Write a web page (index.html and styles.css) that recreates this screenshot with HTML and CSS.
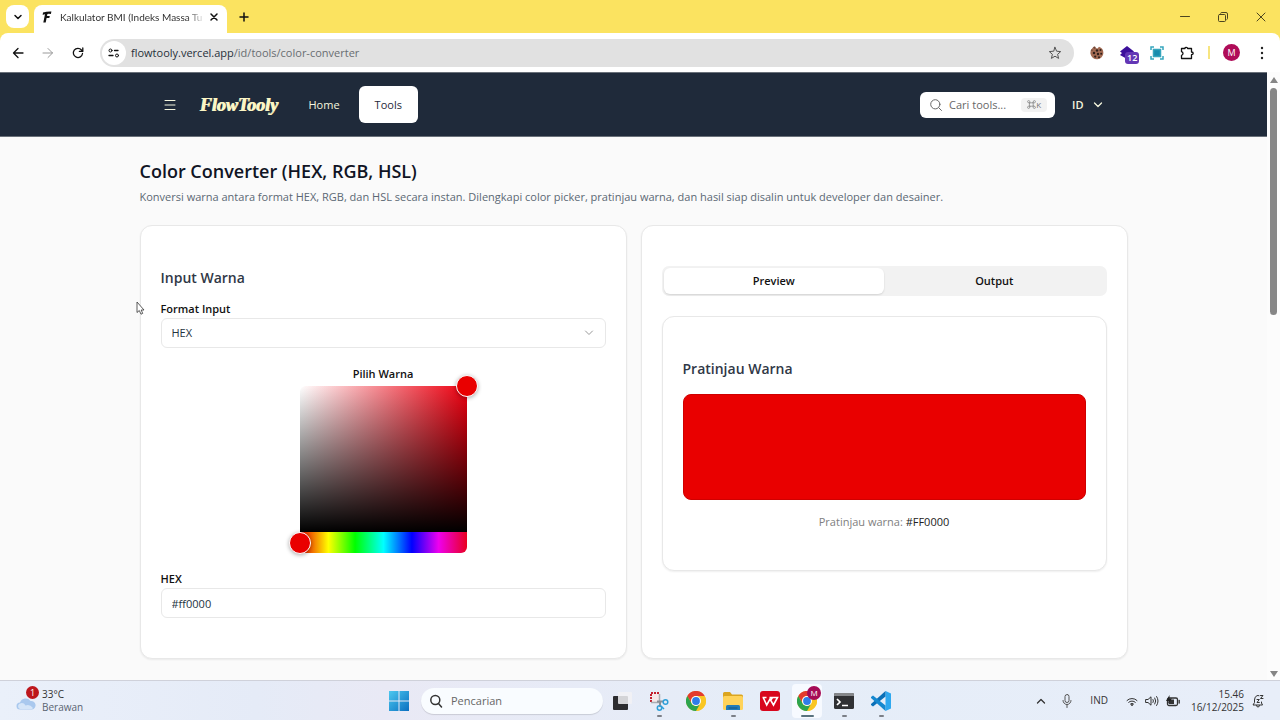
FILE: index.html
```html
<!DOCTYPE html>
<html lang="id">
<head>
<meta charset="utf-8">
<meta name="viewport" content="width=device-width, initial-scale=1">
<title>Color Converter (HEX, RGB, HSL)</title>
<link rel="stylesheet" href="styles.css">
</head>
<body>
<svg class="defs" width="0" height="0" aria-hidden="true">
  <symbol id="chrome" viewBox="0 0 20 20">
    <circle cx="10" cy="10" r="10" fill="#f9c623"/>
    <path d="M10 5h8.7A10 10 0 0 1 10 20l4.3-7.5z" fill="#f9c623"/>
    <path d="M1.3 5A10 10 0 0 1 18.7 5H10a5 5 0 0 0-4.3 7.5z" fill="#e33b2e"/>
    <path d="M1.3 5A10 10 0 0 0 10 20l4.3-7.5a5 5 0 0 1-8.6 0z" fill="#2da44e"/>
    <circle cx="10" cy="10" r="5" fill="#fff"/><circle cx="10" cy="10" r="3.9" fill="#2f7de9"/>
  </symbol>
</svg>

<div class="tabstrip">
  <button class="tab-search" aria-label="Cari tab"><svg width="10" height="10" viewBox="0 0 10 10"><path d="M2 3.5 5 6.5 8 3.5" class="ln thick"/></svg></button>
  <div class="tab">
    <svg width="10" height="12" viewBox="0 0 10 12"><path d="M1 1.6Q5 .4 9.4.6L8.9 3Q6.500 2.600 5.400 3L5 5h2.800l-.5 2H4.600l-.9 4.400H1.300L3 3.200Q1.800 3.200.7 4z" fill="#111"/></svg>
    <span class="tab-title">Kalkulator BMI (Indeks Massa Tu</span>
    <button class="bare" aria-label="Tutup tab"><svg width="10" height="10" viewBox="0 0 10 10"><path d="M2 2l6 6M8 2 2 8" class="ln thick"/></svg></button>
  </div>
  <button class="bare" aria-label="Tab baru"><svg width="12" height="12" viewBox="0 0 12 12"><path d="M6 2v8M2 6h8" class="ln thick"/></svg></button>
  <div class="window-buttons">
    <button class="bare" aria-label="Minimalkan"><svg width="10" height="10" viewBox="0 0 10 10"><path d="M.5 4.500h9" class="ln"/></svg></button>
    <button class="bare" aria-label="Pulihkan"><svg width="10" height="10" viewBox="0 0 10 10"><rect x=".5" y="2.500" width="7" height="7" rx="1" class="ln"/><path d="M2.500 1.200Q3 .5 4 .5h4Q9.500.5 9.500 2v4.500Q9.500 7.300 8.800 7.600" class="ln"/></svg></button>
    <button class="bare" aria-label="Tutup"><svg width="10" height="10" viewBox="0 0 10 10"><path d="M1 1l8 8M9 1 1 9" class="ln"/></svg></button>
  </div>
</div>

<div class="toolbar">
  <button class="bare" aria-label="Kembali"><svg width="12" height="12" viewBox="0 0 12 12"><path d="M11 6H1.500M6 1.500 1.500 6 6 10.500" class="ln mid"/></svg></button>
  <button class="bare muted" aria-label="Maju"><svg width="12" height="12" viewBox="0 0 12 12"><path d="M1 6h9.500M6 1.500 10.500 6 6 10.500" class="ln"/></svg></button>
  <button class="bare" aria-label="Muat ulang"><svg width="12" height="12" viewBox="0 0 12 12"><path d="M10.500 6.500A4.600 4.600 0 1 1 9.500 3L10.700 4.200M10.800 1v3.400H7.400" class="ln mid"/></svg></button>
  <div class="omnibox">
    <button class="site-info" aria-label="Info situs"><svg width="12" height="10" viewBox="0 0 12 10"><circle cx="2.500" cy="2.500" r="1.500" class="ln"/><path d="M6.500 2.500H10M1 7.500h4" class="ln mid"/><circle cx="9" cy="7.500" r="1.500" class="ln"/></svg></button>
    <span class="url">flowtooly.vercel.app<span class="path">/id/tools/color-converter</span></span>
    <button class="bare grey" aria-label="Bookmark"><svg width="14" height="14" viewBox="0 0 14 14"><path d="M7 1.300 8.600 5.200l4.100.4-3.100 2.700 1 4.100L7 10.200l-3.600 2.200 1-4.100L1.300 5.600l4.100-.4z" class="ln"/></svg></button>
  </div>
  <div class="extensions">
    <svg width="14" height="14" viewBox="0 0 14 14"><path d="M5 .6A6.500 6.500 0 1 0 13.400 7 6.500 6.500 0 0 0 9 .8L7.500 2.500 5.500 2z" fill="#a26a52"/><path d="M5 .6 3 1l1.500 2 1.300-1zM.5 4.500 2.800 5 2 3z" fill="#6f4637"/><g fill="#30201b"><circle cx="7" cy="4.500" r="1.200"/><circle cx="10.500" cy="4" r="1"/><circle cx="4" cy="7" r="1.200"/><circle cx="8" cy="8" r="1.200"/><circle cx="11.200" cy="7.800" r="1"/><circle cx="5.200" cy="10.600" r="1.100"/><circle cx="9" cy="11.300" r="1"/></g></svg>
    <span class="ext-count"><svg width="14" height="14" viewBox="0 0 14 14"><path d="M7 0 14 5.500 12 7l2 2-7 4-7-4 2-2L0 5.500z" fill="#3c109b"/></svg><span class="count">12</span></span>
    <svg width="14" height="14" viewBox="0 0 14 14" fill="none" stroke="#35a5bd" stroke-width="1.500"><path d="M1 4V1h3M10 1h3v3M13 10v3h-3M4 13H1v-3"/><rect x="3.500" y="3.500" width="7" height="7" fill="#168bad"/></svg>
    <svg width="14" height="14" viewBox="0 0 14 14"><path d="M1.500 2.500H5Q5 1.300 6.300 1.300t1.300 1.200h3.900V6Q13.200 6 13.200 7.300T11.500 8.700v3.800h-10V9.300Q3 9 3 7.500T1.500 5.700z" class="ln mid"/></svg>
  </div>
  <span class="separator"></span>
  <button class="avatar" aria-label="Profil">M</button>
  <button class="bare" aria-label="Menu"><svg width="4" height="14" viewBox="0 0 4 14" fill="#222"><circle cx="2" cy="2" r="1.200"/><circle cx="2" cy="7" r="1.200"/><circle cx="2" cy="12" r="1.200"/></svg></button>
</div>

<div class="viewport">
  <div class="page">
    <header class="site-header">
      <div class="site-nav">
        <button class="menu" aria-label="Menu situs"><svg width="12" height="12" viewBox="0 0 12 12"><path d="M1 1.500h10M1 6h10M1 10.500h10" class="ln"/></svg></button>
        <a class="brand" href="#">FlowTooly</a>
        <nav class="links"><a href="#">Home</a><a class="active" href="#">Tools</a></nav>
        <button class="search"><svg width="12" height="12" viewBox="0 0 12 12"><circle cx="5.300" cy="5.300" r="4.600" class="ln"/><path d="m8.800 8.800 2.700 2.700" class="ln"/></svg><span>Cari tools...</span><kbd><svg width="9" height="9" viewBox="0 0 8 8"><path d="M2.500 2.500h3v3h-3zM2.500 2.500V1.500a1 1 0 1 0-1 1zM5.500 2.500h1a1 1 0 1 0-1-1zM5.500 5.500v1a1 1 0 1 0 1-1zM2.500 5.500h-1a1 1 0 1 0 1 1z" class="ln hair"/></svg>K</kbd></button>
        <button class="lang">ID<svg width="10" height="10" viewBox="0 0 10 10"><path d="M1.500 3 5 6.500 8.500 3" class="ln mid"/></svg></button>
      </div>
    </header>

    <main class="content">
      <h1>Color Converter (HEX, RGB, HSL)</h1>
      <p class="lead">Konversi warna antara format HEX, RGB, dan HSL secara instan. Dilengkapi color picker, pratinjau warna, dan hasil siap disalin untuk developer dan desainer.</p>
      <div class="columns">
        <section class="card">
          <h2>Input Warna</h2>
          <label for="format">Format Input</label>
          <div class="select-wrap">
            <select id="format" class="field"><option>HEX</option><option>RGB</option><option>HSL</option></select>
            <svg class="caret" width="10" height="10" viewBox="0 0 10 10"><path d="M1.500 3 5 6.500 8.500 3" class="ln"/></svg>
          </div>
          <div class="picker-block">
            <label for="hue">Pilih Warna</label>
            <div class="picker">
              <div class="saturation"><span class="pointer"></span></div>
              <div class="hue"><input id="hue" type="range" min="0" max="360" value="0"></div>
            </div>
          </div>
          <label for="hex">HEX</label>
          <input id="hex" class="field" type="text" value="#ff0000">
        </section>
        <section class="card">
          <div class="tabs" role="tablist">
            <button role="tab" class="selected" aria-selected="true">Preview</button>
            <button role="tab" aria-selected="false">Output</button>
          </div>
          <div class="card inner">
            <h2>Pratinjau Warna</h2>
            <div class="swatch"></div>
            <p class="caption">Pratinjau warna: <strong>#FF0000</strong></p>
          </div>
        </section>
      </div>
    </main>
    <svg class="cursor" width="9" height="14" viewBox="0 0 9 14"><path d="M1 1v10.500l2.300-2 1.700 3.700 1.700-.8L5.200 9H8z" fill="#fff" stroke="#333" stroke-width=".8"/></svg>
  </div>
  <div class="scrollbar"><svg width="8" height="6" viewBox="0 0 8 6"><path d="M4 0 8 6H0z" fill="#858585"/></svg><span class="scroll-thumb"></span><svg width="8" height="6" viewBox="0 0 8 6"><path d="M4 6 0 0h8z" fill="#858585"/></svg></div>
</div>

<footer class="taskbar">
  <button class="weather">
    <span class="weather-icon"><svg width="20" height="13" viewBox="0 0 20 13"><path d="M4 12.500a3.500 3.500 0 0 1 0-7A6 6 0 0 1 14.500 4 4.300 4.300 0 0 1 16 12.500z" fill="#a9c8ee"/><path d="M4 12a3 3 0 0 1 .8-5.800Q8 5.500 9.500 8.500q4-2 7.500 2.500l-1 1z" fill="#d5e5f8"/></svg><span class="alert">1</span></span>
    <span class="weather-text"><span class="degrees">33°C</span><br>Berawan</span>
  </button>
  <div class="apps">
    <button class="app" aria-label="Mulai"><svg width="20" height="20" viewBox="0 0 20 20"><defs><linearGradient id="win" x2="1" y2="1"><stop stop-color="#4cc8ef"/><stop offset="1" stop-color="#0a6fc0"/></linearGradient></defs><path d="M0 0h9.500v9.500H0zM10.500 0H20v9.500h-9.500zM0 10.500h9.500V20H0zM10.500 10.500H20V20h-9.500z" fill="url(#win)"/></svg></button>
    <label class="task-search"><svg width="14" height="14" viewBox="0 0 14 14"><circle cx="6.300" cy="6" r="4.500" class="ln thick"/><path d="m9.500 9.500 3 3.500" class="ln thick"/></svg><input type="text" placeholder="Pencarian" aria-label="Pencarian"></label>
    <button class="app" aria-label="Tampilan tugas"><svg width="20" height="20" viewBox="0 0 20 20"><rect x="1" y="5" width="15" height="14" rx="1" fill="#2c2c2f"/><rect x="6" y="1" width="14" height="12" rx="1" fill="#f2f2f4" fill-opacity=".85"/></svg></button>
    <button class="app open" aria-label="Alat pemotong"><svg width="20" height="20" viewBox="0 0 20 20"><path d="M2 2h9v9H2z" fill="#f5e8ea"/><path d="M2 11V2h8" fill="none" stroke="#c3202f" stroke-width="2" stroke-dasharray="2 1"/><path d="M10.500 3v8.500H2" fill="none" stroke="#a9adb3" stroke-width="1.500"/><path d="M8 10.500h7M11 10v6" fill="none" stroke="#8a9097" stroke-width="2"/><g fill="none" stroke="#2f9fd8" stroke-width="1.500"><circle cx="16.500" cy="11" r="2.300"/><circle cx="10.500" cy="17" r="2.200"/><path d="m12 15 3 3"/></g></svg></button>
    <button class="app" aria-label="Chrome"><svg width="20" height="20"><use href="#chrome"/></svg></button>
    <button class="app open" aria-label="File Explorer"><svg width="20" height="20" viewBox="0 0 20 20"><path d="M0 2.500Q0 1 1.500 1H7l2 2.500h9.500Q20 3.500 20 5v6H0z" fill="#dba520"/><rect y="5" width="20" height="14" rx="1.500" fill="#ffd35a"/><path d="M3 19v-3.500Q3 14 4.500 14h11q1.500 0 1.500 1.500V19z" fill="#217cb9"/><path d="M5.500 17h9" stroke="#145380"/></svg></button>
    <button class="app" aria-label="WPS Office"><svg width="20" height="20" viewBox="0 0 20 20"><rect width="20" height="20" rx="3" fill="#d8061d"/><path d="M2.500 6.500h4M9.500 6.500h8L13.500 14 10 8 6.700 14 3.200 6.500M10.500 9.500l2-3" fill="none" stroke="#fff" stroke-width="1.600"/></svg></button>
    <button class="app open current" aria-label="Chrome, profil M"><svg width="20" height="20"><use href="#chrome"/></svg><span class="profile">M</span></button>
    <button class="app open" aria-label="Terminal"><svg width="20" height="20" viewBox="0 0 20 20"><rect y="2" width="20" height="16" rx="1.500" fill="#303134"/><path d="M0 5V3.500Q0 2 1.500 2h17Q20 2 20 3.500V5z" fill="#85878a"/><path d="m3 8 3 3-3 3M8 14.500h6" fill="none" stroke="#fff" stroke-width="1.700"/></svg></button>
    <button class="app open" aria-label="Visual Studio Code"><svg width="20" height="20" viewBox="0 0 20 20"><path d="M14.500 0 20 2.500v15L14.500 20z" fill="#2fa8ef"/><path d="M14.500 0v5.500L2 15.500 0 14v-1L14.500 0z" fill="#0b70b8"/><path d="M14.500 20v-5.500L2 4.500 0 6v1z" fill="#1688cf"/></svg></button>
  </div>
  <div class="tray">
    <button class="bare" aria-label="Ikon tersembunyi"><svg width="10" height="10" viewBox="0 0 10 10"><path d="M1.500 7 5 3.500 8.500 7" class="ln mid"/></svg></button>
    <svg class="mic" width="10" height="14" viewBox="0 0 10 14"><rect x="3" y=".5" width="4" height="8" rx="2" class="ln"/><path d="M1 6.500a4 4 0 0 0 8 0M5 10.500V13.500" class="ln"/></svg>
    <span class="ind">IND</span>
    <div class="status">
      <svg width="12" height="12" viewBox="0 0 12 12"><path d="M1 5.500a7 7 0 0 1 10 0M2.700 7.300a4.700 4.700 0 0 1 6.600 0M4.400 9a2.300 2.300 0 0 1 3.200 0" class="ln"/><circle cx="6" cy="10" r="1" fill="#333"/></svg>
      <svg width="14" height="12" viewBox="0 0 14 12"><path d="M1 4.500h2L6 1.800v8.400L3 7.500H1zM8 4.500q1 1.500 0 3M9.800 3q2 3 0 6M11.600 1.500q3 4.500 0 9" class="ln"/></svg>
      <svg width="14" height="12" viewBox="0 0 14 12"><rect x="1.500" y="3" width="10" height="7.500" rx="1.500" class="ln mid"/><path d="M13.200 5.500v2.500" class="ln mid"/><path d="M3 4.500h5V9H3z" fill="#333"/><path d="M3.500 0 0 6h2.500L2 9l4-5.500H3.500z" fill="#222"/></svg>
    </div>
    <time class="clock">15.46<br>16/12/2025</time>
    <svg width="12" height="14" viewBox="0 0 12 14"><path d="M7 1.700Q5.800 1.300 5 1.700 2.500 2.600 2.500 6v2.500L1 11h9.500L9.500 9V8M4.500 11.500a1.500 1.500 0 0 0 3 0M8.500 1.500H11L8.500 4.500H11M5 5.500h2.300L5 8.500h2.300" class="ln"/></svg>
  </div>
</footer>
</body>
</html>
```
FILE: styles.css
```css
* { box-sizing: border-box; }
body {
  margin: 0;
  height: 100vh;
  display: flex;
  flex-direction: column;
  overflow: hidden;
  background: #fbe360;
  color: #111;
  font: 11px/16px "Open Sans", "Noto Sans", sans-serif;
}
button, input, select { font: inherit; color: inherit; margin: 0; }
button { border: 0; padding: 0; background: none; }
a { color: inherit; text-decoration: none; }
h1, h2, p { margin: 0; }
svg { display: block; flex: none; }
.defs { position: absolute; }
.ln { fill: none; stroke: currentColor; stroke-width: 1; stroke-linecap: round; stroke-linejoin: round; }
.mid { stroke-width: 1.3; }
.thick { stroke-width: 1.5; }
.hair { stroke-width: .6; }
.bare { display: flex; align-items: center; justify-content: center; }
.muted { color: #999; }
.grey { color: #555; }

/* Browser window */
.tabstrip { display: flex; align-items: flex-end; height: 33px; padding: 0 14px 0 6px; flex: none; }
.tabstrip > .bare { height: 33px; margin-left: 11px; }
.tab-search { display: flex; align-items: center; justify-content: center; width: 23px; height: 23px; margin: 0 5px 5px 0; border-radius: 8px; background: #fff; }
.tab { display: flex; align-items: center; width: 193px; height: 28px; padding: 0 8px 5px 8px; border-radius: 8px 8px 0 0; background: #fff; }
.tab-title { flex: 1; margin: 0 4px 0 8px; white-space: nowrap; font-family: Lato, "Open Sans", sans-serif; font-size: 10px; color: #333; mask-image: linear-gradient(90deg, #000 88%, transparent); }
.window-buttons { display: flex; gap: 28px; height: 33px; margin-left: auto; color: #4c4520; }
.toolbar { display: flex; align-items: center; height: 39px; padding: 0 16px 0 12px; flex: none; background: #fff; border-radius: 8px 8px 0 0; }
.toolbar > .bare:nth-child(-n+3) { width: 12px; margin-right: 18px; }
.toolbar > .bare:nth-child(3) { margin-right: 16px; }
.omnibox { flex: 1; display: flex; align-items: center; height: 28px; padding: 0 12px 0 2px; border-radius: 14px; background: #e1e1e1; }
.site-info { display: flex; align-items: center; justify-content: center; width: 24px; height: 24px; border-radius: 50%; background: #fff; }
.url { flex: 1; margin-left: 5px; color: #27303a; }
.path { color: #696d71; }
.extensions { display: flex; gap: 16px; margin-left: 16px; }
.ext-count { position: relative; }
.count { position: absolute; left: 5px; top: 6px; padding: 0 2px; border-radius: 3px; background: #6336b5; color: #fff; font-size: 9px; line-height: 12px; font-weight: 600; }
.separator { width: 2px; height: 13px; margin: 0 13px 0 14px; background: #f7e580; }
.avatar { width: 17px; height: 17px; margin-right: 20px; border-radius: 50%; background: #af0c58; color: #fff; font-size: 9px; }

/* Page */
.viewport { position: relative; flex: 1; min-height: 0; display: flex; background: #fafafa; }
.page { flex: 1; min-width: 0; overflow: hidden; }
.site-header { background: #1f2a3a; border-top: 1px solid #697079; border-bottom: 1px solid #697079; color: #f5f6de; }
.site-nav { display: flex; align-items: center; max-width: 988px; height: 63px; margin: 0 auto; padding: 0 24px; }
.brand { margin-left: 24px; width: 79px; font: italic bold 18px/24px "Liberation Serif", serif; color: #fbf6c5; text-shadow: 1px 0 #fbf6c5; }
.links { display: flex; margin-left: 14px; }
.links a { padding: 10px 16px; border-radius: 6px; line-height: 17px; }
.links .active { margin-left: 3px; background: #fff; color: #1f2a3a; }
.search { display: flex; align-items: center; width: 135px; height: 26px; margin-left: auto; padding: 0 8px 0 10px; border-radius: 6px; background: #fff; color: #686868; }
.search span { margin-left: 7px; }
.search kbd { display: flex; align-items: center; gap: 0; height: 14px; margin-left: auto; padding: 0 6px; border-radius: 4px; background: #f2f2f2; color: #777; font: 8px/14px "Open Sans", sans-serif; }
.lang { display: flex; align-items: center; gap: 9px; margin-left: 17px; padding-right: 1px; font-weight: 600; }
.content { max-width: 988px; margin: 0 auto; padding: 21px 0; }
h1 { font-size: 18px; line-height: 26px; font-weight: 600; color: #101424; }
.lead { margin-top: 5px; color: #5b6874; }
.columns { display: grid; grid-template-columns: 1fr 1fr; gap: 14px; margin-top: 20px; }
.card { padding: 40px 20px; border: 1px solid #e8e8e8; border-radius: 12px; background: #fff; box-shadow: 0 1px 2px #0001; }
h2 { margin-bottom: 12px; font-size: 14px; line-height: 23px; font-weight: 600; color: #303846; }
label { display: block; font-weight: 600; margin-bottom: 1px; }
.field { display: block; width: 100%; height: 30px; padding: 0 10px; border: 1px solid #e8e8e8; border-radius: 6px; background: #fff; color: #24343f; appearance: none; outline: 0; }
.select-wrap { position: relative; }
.caret { position: absolute; right: 12px; top: 10px; color: #999; }
.picker-block { display: flex; flex-direction: column; align-items: center; margin: 18px 0; }
.picker-block label { margin-bottom: 4px; }
.picker { width: 167px; }
.saturation { position: relative; height: 146px; border-radius: 6px 0 0; background: linear-gradient(0deg, #000, transparent), linear-gradient(90deg, #fff, #ed0010); }
.pointer { position: absolute; top: -11px; right: -11px; width: 22px; height: 22px; border: 1px solid #fff; border-radius: 50%; background: #e90000; box-shadow: 0 1px 4px #0005; }
.hue { height: 21px; border-radius: 0 0 6px 6px; background: linear-gradient(90deg, #e90000 0, #ff0 17%, #0f0 33%, #0ff 50%, #00f 67%, #e0e 83%, #e90020 100%); }
.hue input { display: block; width: calc(100% + 22px); height: 21px; margin: 0 -11px; appearance: none; background: none; }
.hue input::-webkit-slider-thumb { appearance: none; width: 22px; height: 22px; border: 1px solid #fff; border-radius: 50%; background: #e90000; box-shadow: 0 1px 4px #0005; }
.tabs { display: grid; grid-template-columns: 1fr 1fr; height: 30px; padding: 2px; margin-bottom: 20px; border-radius: 7px; background: #f2f2f2; }
.tabs button { border-radius: 6px; font-weight: 600; }
.tabs .selected { background: #fff; box-shadow: 0 1px 2px #0002; }
.swatch { height: 106px; border: 1px solid #cf0000; border-radius: 8px; background: #e90000; }
.inner h2 { margin-bottom: 14px; }
.caption { margin-top: 14px; text-align: center; color: #808080; }
.caption strong { font-weight: 400; color: #222; }
.cursor { position: absolute; left: 136px; top: 229px; }
.scrollbar { display: flex; flex-direction: column; align-items: center; width: 13px; padding: 5px 0 3px; background: #fcfcfc; }
.scroll-thumb { width: 7px; height: 227px; margin: 5px 0 auto; border-radius: 4px; background: #868686; }

/* Taskbar */
.taskbar { display: grid; grid-template-columns: 1fr auto 1fr; align-items: center; height: 40px; padding: 0 16px; flex: none; border-top: 1px solid #cfd1da; background: linear-gradient(90deg, #eaf0fa, #e5ebf7 20%, #e9e9f5 30%, #e5edf8 60%, #e8eef9); font-size: 10px; line-height: 13px; color: #333; }
.weather { display: flex; gap: 6px; text-align: left; line-height: 13px; }
.weather-icon { position: relative; padding-top: 9px; }
.alert { position: absolute; left: 10px; top: -2px; width: 13px; height: 13px; border-radius: 50%; background: #bd171d; color: #fff; font-size: 9px; line-height: 13px; text-align: center; }
.weather-text { color: #5a6472; }
.degrees { color: #333; }
.apps { display: flex; align-items: center; gap: 7px; }
.app { position: relative; display: flex; align-items: center; justify-content: center; width: 30px; height: 34px; border-radius: 4px; }
.app.open::after { content: ""; position: absolute; bottom: 1px; width: 5px; height: 2px; border-radius: 1px; background: #7b7f87; }
.app.current { background: #f7faff; }
.app.current::after { width: 13px; background: #59727e; }
.profile { position: absolute; right: 1px; top: 2px; width: 14px; height: 14px; border-radius: 50%; background: #a50b56; color: #fff; font-size: 8px; line-height: 14px; }
.task-search { display: flex; align-items: center; gap: 8px; width: 182px; height: 26px; margin: 0 -3px 0 0; padding: 0 8px; border-radius: 13px; background: #f9fcff; box-shadow: 0 1px 1px #0002; font-weight: 400; }
.task-search input { width: 100%; min-width: 0; padding: 0; border: 0; outline: 0; background: none; font-size: 11px; }
.task-search input::placeholder { color: #666; }
.tray { display: flex; align-items: center; justify-content: flex-end; }
.mic { margin-left: 16px; color: #555; }
.ind { margin: 0 18px; }
.status { display: flex; gap: 7px; }
.clock { margin: 0 8px 0 11px; text-align: right; }
```
